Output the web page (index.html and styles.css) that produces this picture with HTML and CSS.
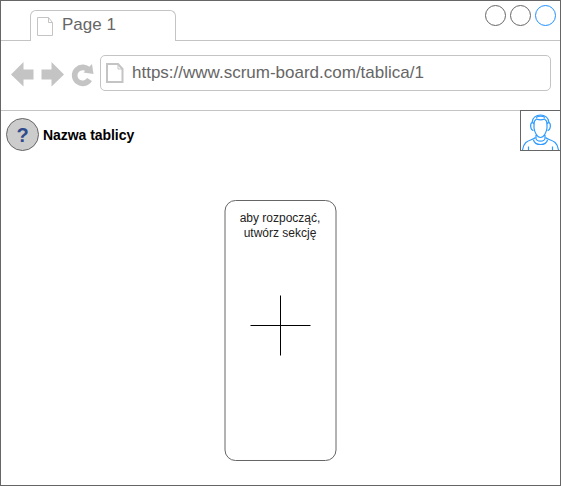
FILE: index.html
```html
<!DOCTYPE html>
<html lang="pl">
<head>
<meta charset="utf-8">
<title>Nazwa tablicy</title>
<link rel="stylesheet" href="styles.css">
</head>
<body>
<div class="window">
  <div class="tabs">
    <div class="tabs-lead"></div>
    <div class="tab">
      <svg class="tab-icon" width="17" height="20" viewBox="0 0 17 20"><path d="M.5 .5H11.5L15.5 5.5V18.5H.5ZM11.5 .5V5.5H15.5"/></svg>
      <span>Page 1</span>
    </div>
    <div class="tabs-rest">
      <svg width="73" height="24" viewBox="0 0 73 24"><circle cx="11.5" cy="11.5" r="10"/><circle cx="36.5" cy="11.5" r="10"/><circle class="blue" cx="61.5" cy="11.5" r="10"/></svg>
    </div>
  </div>
  <div class="toolbar">
    <svg class="nav" width="86" height="28" viewBox="0 0 86 28">
      <path d="M0 13.500L12.500 1V8.500H22.500V18.500H12.500V25.500ZM53 13.500L40.500 1V8.500H30.500V18.500H40.500V25.500Z"/>
      <path class="reload" d="M78.500 18.500A8 8 0 1 1 78 9.500"/>
      <path d="M81 3L82.500 13L72.500 11.500Z"/>
    </svg>
    <div class="address">
      <svg class="page-icon" width="18" height="21" viewBox="0 0 18 21"><path d="M1 1H12L16.500 6V19H1Z"/><path class="fold" d="M12 1V6H16.500"/></svg>
      <span>https://www.scrum-board.com/tablica/1</span>
    </div>
  </div>
  <header class="board-head">
    <div class="help">?</div>
    <h1>Nazwa tablicy</h1>
    <svg class="avatar" width="41" height="41" viewBox="0 0 41 41">
      <rect x=".5" y=".5" width="40" height="40"/>
      <g>
        <path d="M13.500 20.500C10 20 10 13.500 12 12.500C12.500 2.500 28.500 2.500 29 12.500C31 13.500 31 20 27.500 20.500"/>
        <path d="M12 12.500L14 13.500C14 11.500 15 10 16.500 9C19 10 22 10 24.500 9C26 10 27 11.500 27 13.500L29 12.500M16 7.500C18.500 6 22.500 6 25 7.500"/>
        <path d="M14 13.500V18C14.500 22 17 27.500 20.500 27.500S26.500 22 27 18V13.500M16 25V28.500C16.500 32 24.500 32 25 28.500V25"/>
        <path d="M15.500 27.500C12 31 4 29 2.500 40M25.500 27.500C29 31 37 29 38.500 40M13.500 30C15 36 26 36 27.500 30M8.500 36.500V40M32.500 36.500V40"/>
      </g>
    </svg>
  </header>
  <main class="board">
    <section class="card">
      <svg class="outline" width="113" height="262" viewBox="0 0 113 262"><rect x="1" y=".5" width="111" height="260" rx="10.500"/></svg>
      <p>aby rozpocząć,<br>utwórz sekcję</p>
      <svg class="plus" width="62" height="61" viewBox="0 0 62 61"><path d="M.5 30.500H60.500M30.500 .5V60.500"/></svg>
    </section>
  </main>
</div>
</body>
</html>
```

FILE: styles.css
```css
* { box-sizing: border-box; }
body { margin: 0; background: #fff; font-family: "Liberation Sans", Arial, sans-serif; }
svg { display: block; flex: none; fill: none; }
.window { width: 561px; height: 486px; border: 1px solid #666; display: flex; flex-direction: column; }
.tabs { display: flex; height: 40px; flex: none; }
.tabs-lead { width: 29px; border-bottom: 1px solid #c4c4c4; }
.tab { width: 146px; height: 31px; margin-top: 9px; border: 1px solid #c4c4c4; border-bottom: 0; border-radius: 6px 6px 0 0; display: flex; padding: 6px 0 0 6px; gap: 8px; color: #666; font-size: 17px; line-height: 16px; }
.tab-icon { stroke: #c4c4c4; }
.tabs-rest { flex: 1; border-bottom: 1px solid #c4c4c4; display: flex; justify-content: flex-end; padding: 3px 3px 0 0; }
.tabs-rest svg { stroke: #666; }
.tabs-rest .blue { stroke: #1e90ff; }
.toolbar { display: flex; height: 70px; flex: none; border-bottom: 1px solid #c4c4c4; padding: 14px 9px 0 10px; }
.nav { margin: 6px 3px 0 0; fill: #c4c4c4; }
.reload { fill: none; stroke: #c4c4c4; stroke-width: 5.6; }
.address { flex: 1; height: 36px; border: 1px solid #c4c4c4; border-radius: 5px; display: flex; padding: 7px 0 0 5px; gap: 8px; color: #666; font-size: 17px; line-height: 19px; }
.page-icon { stroke: #c4c4c4; stroke-width: 2; }
.fold { stroke-width: 1; }
.board-head { display: flex; flex: none; height: 45px; padding-left: 5px; }
.help { width: 33px; height: 33px; margin-top: 7px; border: 1px solid #666; border-radius: 50%; background: #ccc; color: #2f4b8c; font-size: 20px; font-weight: bold; line-height: 32px; text-align: center; }
h1 { margin: 16px auto 0 4px; font-size: 14px; line-height: 16px; letter-spacing: -0.05px; color: #000; }
.avatar { margin: -1px -1px 0 0; position: relative; }
.avatar rect { fill: #fff; stroke: #666; }
.avatar g { stroke: #2f9bff; stroke-width: 1.2; }
.board { display: flex; justify-content: center; padding-top: 44px; }
.card { position: relative; width: 113px; height: 262px; display: flex; flex-direction: column; align-items: center; padding-top: 11px; }
.outline { position: absolute; inset: 0; stroke: #666; }
.card p { margin: 0 1px 0 0; font-size: 12px; line-height: 15px; text-align: center; color: #222; white-space: nowrap; }
.plus { margin-top: 54px; stroke: #000; }
```
